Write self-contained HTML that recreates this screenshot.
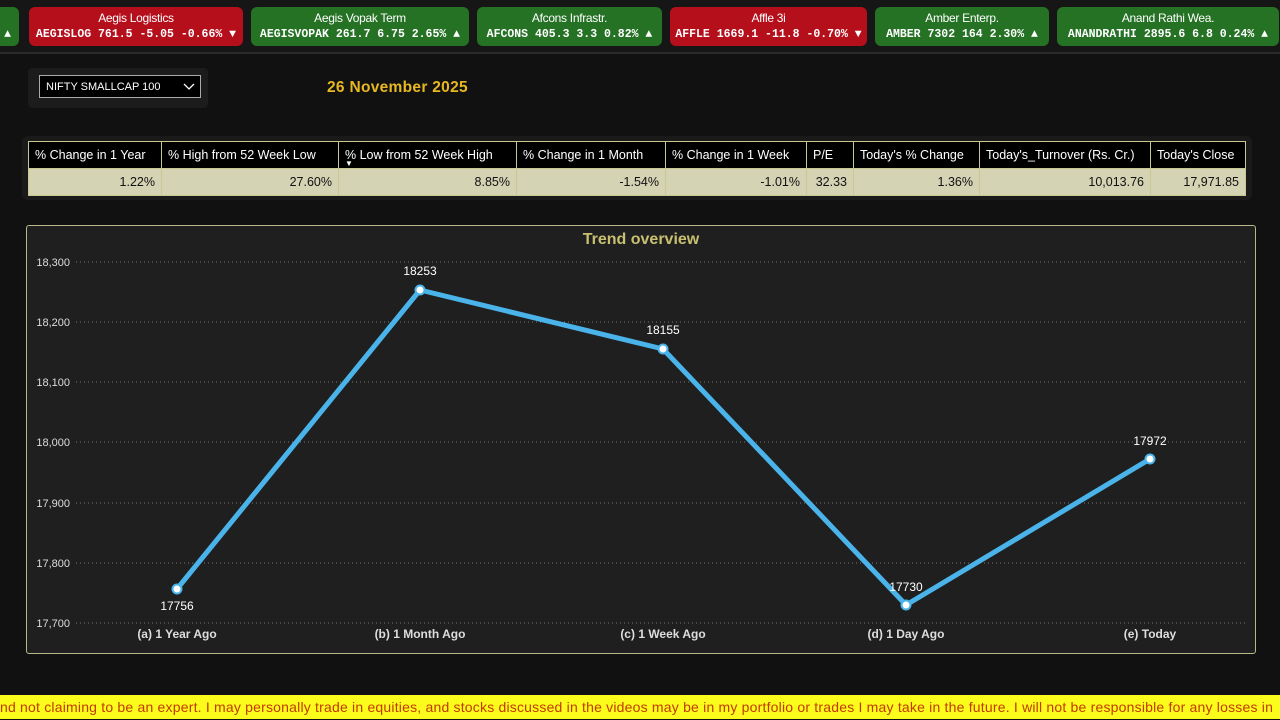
<!DOCTYPE html><html><head><style>
body{margin:0;width:1280px;height:720px;background:#111112;overflow:hidden;position:relative;font-family:"Liberation Sans",sans-serif}
.top{position:absolute;left:0;top:0;width:1280px;height:52px;background:#161616;border-bottom:2px solid #2a2a2a}
.c{position:absolute;top:7px;height:39px;border-radius:6px;color:#fff;text-align:center}
.c .n{font-size:12px;margin-top:4px;letter-spacing:-0.3px}
.c .v{font-family:"Liberation Mono",monospace;font-weight:bold;font-size:11.5px;margin-top:3px;white-space:nowrap}
.g{background:#257225}.r{background:#b50f1c}
.dd{position:absolute;left:28px;top:68px;width:180px;height:40px;background:#1c1c1c;border-radius:4px}
.sel{position:absolute;left:39px;top:75px;width:162px;height:23px;border:1px solid #aaa;background:#000;color:#fff;font-size:11px;line-height:23px;padding-left:6px;box-sizing:border-box}
.date{position:absolute;left:327px;top:79px;color:#e8b820;font-weight:bold;font-size:15.5px;letter-spacing:0.3px}
.tw{position:absolute;left:22px;top:136px;width:1230px;height:64px;background:#1a1a1a;border-radius:6px}
table{position:absolute;left:28px;top:141px;border-collapse:collapse;font-size:12.5px}
td{border:1px solid #c8c890;padding:0 6px;height:26px;white-space:nowrap}
tr.h td{background:#000;color:#fff}
tr.d td{background:#d4d3b4;color:#111;text-align:right}
.ch{position:absolute;left:26px;top:225px;width:1228px;height:427px;border:1px solid #b8b888;border-radius:3px;background:#1f1f1f}
.ban{position:absolute;left:0;top:695px;width:1280px;height:24px;background:#fcfc1c;color:#c23a00;font-size:14px;line-height:24px;white-space:nowrap;letter-spacing:0.2px}
</style></head><body>
<div class="top">
<div class="c g" style="left:-10px;width:29px"><div class="n">&nbsp;</div><div class="v" style="text-align:right;padding-right:8px">▲</div></div>
<div class="c r" style="left:29px;width:214px"><div class="n">Aegis Logistics</div><div class="v">AEGISLOG 761.5 -5.05 -0.66% ▼</div></div>
<div class="c g" style="left:251px;width:218px"><div class="n">Aegis Vopak Term</div><div class="v">AEGISVOPAK 261.7 6.75 2.65% ▲</div></div>
<div class="c g" style="left:477px;width:185px"><div class="n">Afcons Infrastr.</div><div class="v">AFCONS 405.3 3.3 0.82% ▲</div></div>
<div class="c r" style="left:670px;width:197px"><div class="n">Affle 3i</div><div class="v">AFFLE 1669.1 -11.8 -0.70% ▼</div></div>
<div class="c g" style="left:875px;width:174px"><div class="n">Amber Enterp.</div><div class="v">AMBER 7302 164 2.30% ▲</div></div>
<div class="c g" style="left:1057px;width:222px"><div class="n">Anand Rathi Wea.</div><div class="v">ANANDRATHI 2895.6 6.8 0.24% ▲</div></div>
</div>
<div class="dd"></div>
<div class="sel">NIFTY SMALLCAP 100<svg style="position:absolute;right:5px;top:7px" width="12" height="8"><path d="M1 1L6 6L11 1" stroke="#fff" fill="none" stroke-width="1.3"/></svg></div>
<div class="date">26 November 2025</div>
<div class="tw"></div>
<table>
<tr class="h"><td style="width:120px">% Change in 1 Year</td><td style="width:164px">% High from 52 Week Low</td><td style="width:165px;position:relative">% Low from 52 Week High<span style="position:absolute;left:6px;top:17px;font-size:8px">▼</span></td><td style="width:136px">% Change in 1 Month</td><td style="width:128px">% Change in 1 Week</td><td style="width:34px">P/E</td><td style="width:113px">Today's % Change</td><td style="width:158px">Today's_Turnover (Rs. Cr.)</td><td style="width:82px">Today's Close</td></tr>
<tr class="d"><td>1.22%</td><td>27.60%</td><td>8.85%</td><td>-1.54%</td><td>-1.01%</td><td>32.33</td><td>1.36%</td><td>10,013.76</td><td>17,971.85</td></tr>
</table>
<div class="ch"></div>
<svg style="position:absolute;left:0;top:0" width="1280" height="720" font-family="Liberation Sans,sans-serif">
<text x="641" y="244" fill="#c8c070" font-size="16" font-weight="bold" text-anchor="middle">Trend overview</text>
<g stroke="#777" stroke-dasharray="1 3" stroke-width="1">
<line x1="76" x2="1248" y1="262" y2="262"/><line x1="76" x2="1248" y1="322" y2="322"/><line x1="76" x2="1248" y1="382" y2="382"/><line x1="76" x2="1248" y1="442" y2="442"/><line x1="76" x2="1248" y1="503" y2="503"/><line x1="76" x2="1248" y1="563" y2="563"/><line x1="76" x2="1248" y1="623" y2="623"/></g>
<g fill="#ddd" font-size="11" text-anchor="end"><text x="70" y="266">18,300</text><text x="70" y="326">18,200</text><text x="70" y="386">18,100</text><text x="70" y="446">18,000</text><text x="70" y="507">17,900</text><text x="70" y="567">17,800</text><text x="70" y="627">17,700</text></g>
<g fill="#ddd" font-size="12" font-weight="bold" text-anchor="middle"><text x="177" y="638">(a) 1 Year Ago</text><text x="420" y="638">(b) 1 Month Ago</text><text x="663" y="638">(c) 1 Week Ago</text><text x="906" y="638">(d) 1 Day Ago</text><text x="1150" y="638">(e) Today</text></g>
<polyline points="177,589 420,290 663,349 906,605 1150,459" fill="none" stroke="#4ab4ea" stroke-width="5" stroke-linejoin="round"/>
<g fill="#fff" stroke="#4ab4ea" stroke-width="2"><circle cx="177" cy="589" r="4.5"/><circle cx="420" cy="290" r="4.5"/><circle cx="663" cy="349" r="4.5"/><circle cx="906" cy="605" r="4.5"/><circle cx="1150" cy="459" r="4.5"/></g>
<g fill="#fff" font-size="12" text-anchor="middle"><text x="177" y="610">17756</text><text x="420" y="275">18253</text><text x="663" y="334">18155</text><text x="906" y="591">17730</text><text x="1150" y="445">17972</text></g>
</svg>
<div class="ban">nd not claiming to be an expert. I may personally trade in equities, and stocks discussed in the videos may be in my portfolio or trades I may take in the future. I will not be responsible for any losses in</div>
</body></html>
